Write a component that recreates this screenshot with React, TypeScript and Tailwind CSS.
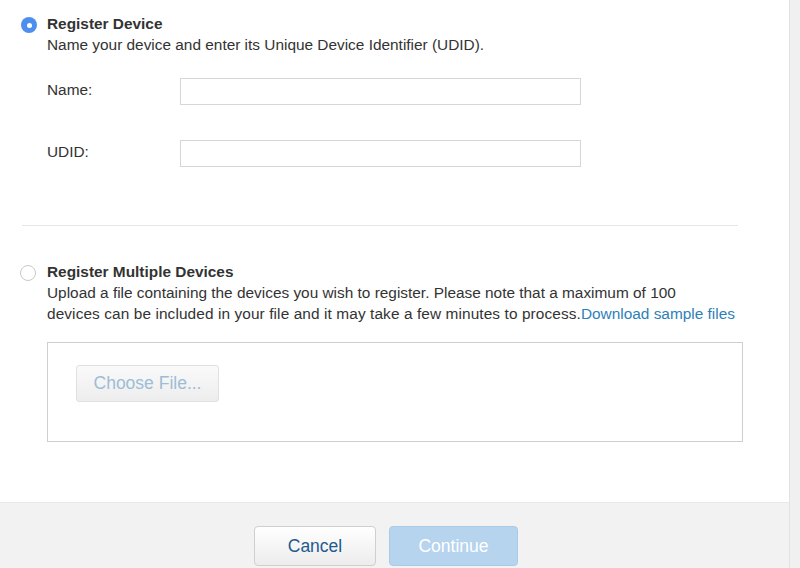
import React, { useState } from 'react';

const font = "font-['Liberation_Sans','Helvetica',Arial,sans-serif]";

const Radio: React.FC<{ checked: boolean; onClick: () => void }> = ({ checked, onClick }) => (
    <button
        onClick={onClick}
        className={`mt-[4px] w-[16px] h-[16px] rounded-full shrink-0 flex items-center justify-center ${checked ? 'bg-[#4d8fee]' : 'bg-white border border-[#c9c9c9]'}`}
    >
        {checked && <span className="w-[5px] h-[5px] rounded-full bg-white" />}
    </button>
);

const App: React.FC = () => {
    const [mode, setMode] = useState<'single' | 'multiple'>('single');
    const [name, setName] = useState('');
    const [udid, setUdid] = useState('');

    const inputStyle = "w-[401px] h-[27px] border border-[#d6d6d6] bg-white px-2 outline-none text-[15px]";

    return (
        <div className={`w-[800px] h-[568px] flex bg-white text-[#333] ${font}`}>
            <div className="w-[790px] h-full flex flex-col border-r border-[#e2e2e2]">
                <div className="flex-1">
                    <div className="pl-[21px] pt-[13px] flex gap-[10px]">
                        <Radio checked={mode === 'single'} onClick={() => setMode('single')} />
                        <div className="text-[15.4px] leading-[21px]">
                            <div className="font-bold">Register Device</div>
                            <div>Name your device and enter its Unique Device Identifier (UDID).</div>
                            <div className="mt-[23px] flex items-center">
                                <label className="w-[133px] -mt-[4px]">Name:</label>
                                <input value={name} onChange={e => setName(e.target.value)} className={inputStyle} />
                            </div>
                            <div className="mt-[35px] flex items-center">
                                <label className="w-[133px] -mt-[4px]">UDID:</label>
                                <input value={udid} onChange={e => setUdid(e.target.value)} className={inputStyle} />
                            </div>
                        </div>
                    </div>

                    <div className="ml-[22px] w-[716px] mt-[58px] border-t border-[#e6e6e6]" />

                    <div className="pl-[20px] pt-[35px] flex gap-[11px]">
                        <Radio checked={mode === 'multiple'} onClick={() => setMode('multiple')} />
                        <div className="text-[15.4px] leading-[21px]">
                            <div className="font-bold">Register Multiple Devices</div>
                            <div className="w-[710px]">
                                Upload a file containing the devices you wish to register. Please note that a maximum of 100
                                <br />
                                <span className="tracking-[0.1px]">devices can be included in your file and it may take a few minutes to process.</span><a href="#" className="text-[#2e80b8]">Download sample files</a>
                            </div>
                            <div className="mt-[18px] w-[696px] h-[100px] border border-[#cfcfcf] pl-[28px] pt-[22px]">
                                <button className="w-[143px] h-[37px] rounded-[3px] border border-[#e0e0e0] bg-gradient-to-b from-[#fafafa] to-[#ededed] text-[17.5px] text-[#9dbdd6]">
                                    Choose File...
                                </button>
                            </div>
                        </div>
                    </div>
                </div>

                <footer className="h-[66px] bg-[#f2f2f2] border-t border-[#e8e8e8] pt-[23px] pl-[254px] flex gap-[13px]">
                    <button className="w-[122px] h-[40px] rounded-[4px] border border-[#cfcfcf] bg-gradient-to-b from-white to-[#ececec] text-[17.5px] text-[#1f5a8e]">
                        Cancel
                    </button>
                    <button className="w-[129px] h-[40px] rounded-[4px] border border-[#aacbe6] bg-[#b6d4ee] text-[17.5px] text-white">
                        Continue
                    </button>
                </footer>
            </div>
            <div className="flex-1 bg-[#f0f0f0]" />
        </div>
    );
};

export default App;
